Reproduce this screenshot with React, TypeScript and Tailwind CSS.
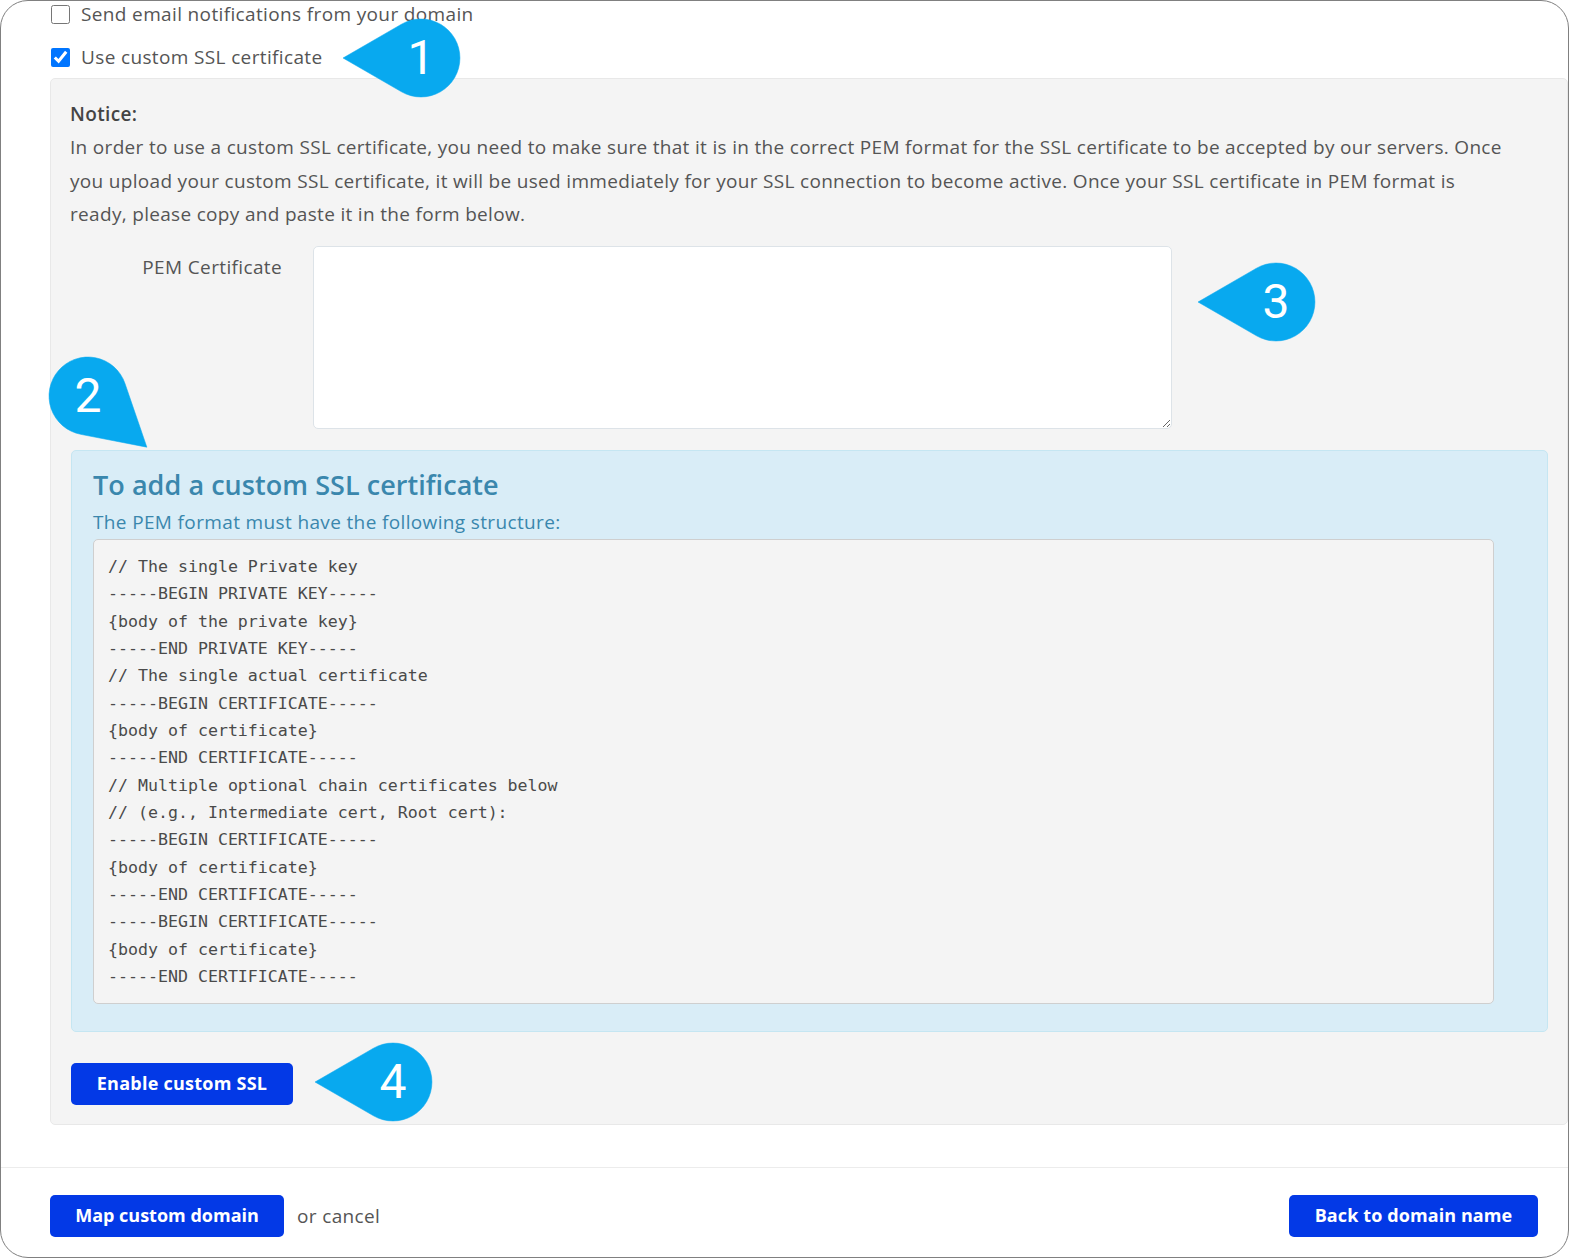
const pem = `// The single Private key
-----BEGIN PRIVATE KEY-----
{body of the private key}
-----END PRIVATE KEY-----
// The single actual certificate
-----BEGIN CERTIFICATE-----
{body of certificate}
-----END CERTIFICATE-----
// Multiple optional chain certificates below
// (e.g., Intermediate cert, Root cert):
-----BEGIN CERTIFICATE-----
{body of certificate}
-----END CERTIFICATE-----
-----BEGIN CERTIFICATE-----
{body of certificate}
-----END CERTIFICATE-----`;

function Callout({ n, cx, cy, rotate }: { n: string; cx: number; cy: number; rotate: number }) {
  return (
    <div className="absolute w-[176px] h-[176px] flex items-center justify-center" style={{ left: cx - 88, top: cy - 88 }}>
      <svg className="absolute inset-0" width="176" height="176" viewBox="-88 -88 176 176">
        <path
          d="M-78 0 L-19.5 -33.8 A39 39 0 1 1 -19.5 33.8 Z"
          fill="#08a9ef"
          stroke="#08a9ef"
          strokeLinejoin="round"
          strokeWidth="0.5"
          transform={`rotate(${rotate})`}
        />
      </svg>
      <span className="relative text-white font-normal text-[48px] leading-none font-['Roboto',sans-serif]">{n}</span>
    </div>
  );
}

function Btn({ children, className }: { children: string; className: string }) {
  return (
    <button className={`h-[42px] rounded-[5px] bg-[#0339e6] text-white text-[18px] font-bold font-['Open_Sans',sans-serif] ${className}`}>
      {children}
    </button>
  );
}

export default function App() {
  return (
    <div className="relative h-[1258px] w-[1569px] overflow-hidden bg-white">
      <div className="relative flex h-full flex-col overflow-hidden rounded-[28px] border border-[#808080] bg-white font-['Open_Sans',sans-serif] text-[19px] tracking-[0.36px] text-[#555555]">
        <div className="flex-1 pl-[49px]">
          <label className="ml-[1px] flex h-[26px] items-center gap-[11px]">
            <input type="checkbox" readOnly className="h-[19px] w-[19px] m-0" />
            <span>Send email notifications from your domain</span>
          </label>
          <label className="ml-[1px] mt-[17px] flex h-[26px] items-center gap-[11px]">
            <input type="checkbox" checked readOnly className="h-[19px] w-[19px] m-0" />
            <span>Use custom SSL certificate</span>
          </label>
          <div className="mt-[8px] h-[1047px] rounded-[5px] border border-[#e8e8e8] bg-[#f4f4f4] px-[20px] pt-[19px]">
            <p className="-ml-[1px] font-semibold leading-[33px] text-[#444444]">Notice:</p>
            <p className="-ml-[1px] mt-[0.3px] w-[1440px] leading-[33.5px] tracking-[0.315px]">
              In order to use a custom SSL certificate, you need to make sure that it is in the correct PEM format for the SSL certificate to be accepted by our servers. Once you upload your custom SSL certificate, it will be used immediately for your SSL connection to become active. Once your SSL certificate in PEM format is ready, please copy and paste it in the form below.
            </p>
            <div className="mt-[14.2px] flex">
              <div className="w-[211px] pt-[8px] text-right leading-[26px]">PEM Certificate</div>
              <textarea readOnly className="ml-[31px] h-[183px] w-[859px] rounded-[5px] border border-[#dde3e8] bg-white" />
            </div>
            <div className="mt-[21px] h-[582px] w-[1477px] rounded-[5px] border border-[#c5e6f2] bg-[#d9edf7] pl-[21px] pt-[15px] text-[#3a87ad]">
              <h2 className="text-[27px] font-semibold leading-[38px] tracking-[0.05px]">To add a custom SSL certificate</h2>
              <p className="mt-[3px] mb-[2px] leading-[30px]">The PEM format must have the following structure:</p>
              <pre className="h-[465px] w-[1401px] rounded-[5px] border border-[#cfcfcf] bg-[#f4f4f4] px-[14px] pt-[13px] font-['DejaVu_Sans_Mono',monospace] text-[16.6px] tracking-normal leading-[27.35px] text-[#4a4a4a] m-0">
                {pem}
              </pre>
            </div>
            <Btn className="mt-[31px] w-[222px] tracking-[0.24px]">Enable custom SSL</Btn>
          </div>
        </div>
        <div className="flex h-[90px] items-center border-t border-[#ececec] px-[49px] pt-[7px]">
          <Btn className="w-[234px] pb-[2px] tracking-normal">Map custom domain</Btn>
          <span className="ml-[13px]">or cancel</span>
          <Btn className="ml-auto mr-[-19px] w-[249px] pb-[2px] tracking-[0.1px]">Back to domain name</Btn>
        </div>
      </div>
      <Callout n="1" cx={421} cy={58} rotate={0} />
      <Callout n="2" cx={88} cy={396} rotate={-139} />
      <Callout n="3" cx={1276} cy={302} rotate={0} />
      <Callout n="4" cx={393} cy={1082} rotate={0} />
    </div>
  );
}
